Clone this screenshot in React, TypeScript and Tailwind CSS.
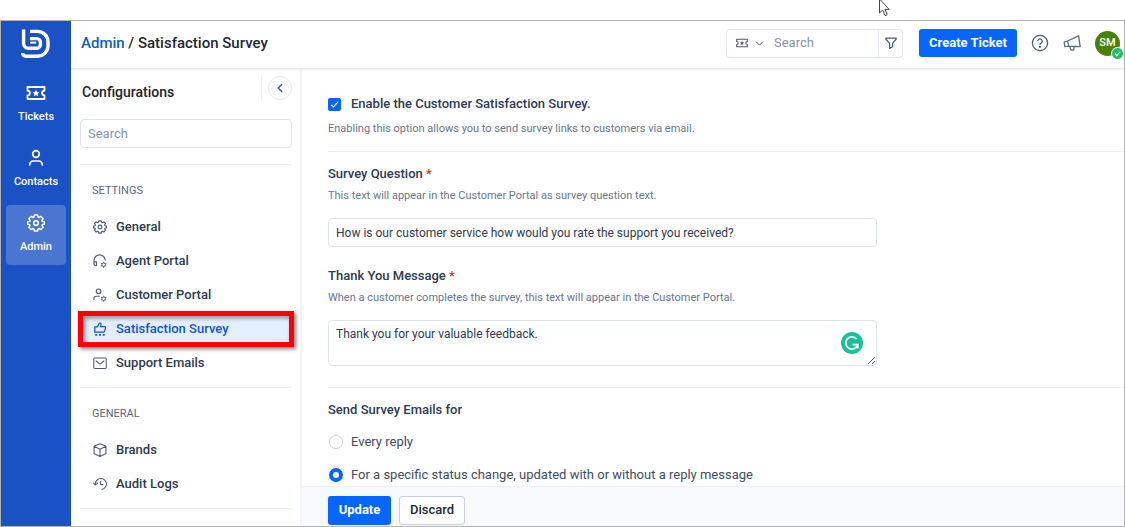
import React from 'react';
import { ChevronLeft, ChevronDown } from 'lucide-react';

type IconProps = { className?: string };

const LogoIcon: React.FC<IconProps> = ({ className }) => (
  <svg viewBox="0 0 30 30" className={className} fill="none" stroke="currentColor" strokeWidth="3.4" strokeLinejoin="round">
    <path d="M2.6 .6v13.8a4.8 4.8 0 0 0 4.8 4.8h8.4a3.6 3.6 0 0 0 3.6-3.6v-2.4a3.6 3.6 0 0 0-3.6-3.6H9" />
    <path d="M9.2 13.6h6" strokeWidth="2" />
    <path d="M9 2.4h7.6a10.4 10.4 0 0 1 10.4 10.4v4a10.4 10.4 0 0 1-10.4 10.4H4.8a3.2 3.2 0 0 1-3.2-3.2" />
  </svg>
);

const TicketIcon: React.FC<IconProps> = ({ className }) => (
  <svg viewBox="0 0 20 16" className={className} fill="none" stroke="currentColor" strokeWidth="1.8" strokeLinejoin="round">
    <path d="M1.5 2h17v3.6a2.4 2.4 0 0 0 0 4.8V14h-17v-3.6a2.4 2.4 0 0 0 0-4.8z" />
    <path d="m10 4.6 1 2.3 2.5.2-1.9 1.6.6 2.5-2.2-1.3-2.2 1.3.6-2.5-1.9-1.6 2.5-.2z" fill="currentColor" stroke="none" />
  </svg>
);

const PersonIcon: React.FC<IconProps> = ({ className }) => (
  <svg viewBox="0 0 18 18" className={className} fill="none" stroke="currentColor" strokeWidth="1.7">
    <circle cx="9" cy="5" r="3.3" />
    <path d="M2.8 16.6v-1.2a3.4 3.4 0 0 1 3.4-3.4h5.6a3.4 3.4 0 0 1 3.4 3.4v1.2" />
  </svg>
);

const GearIcon: React.FC<IconProps> = ({ className }) => (
  <svg viewBox="0 0 20 20" className={className} fill="none" stroke="currentColor" strokeWidth="1.7" strokeLinejoin="round">
    <path d="M8.2 1.2h3.6l.6 2.3 1 .4 2-1.2 2.5 2.5-1.2 2 .4 1 2.3.6v2.4l-2.3.6-.4 1 1.2 2-2.5 2.5-2-1.2-1 .4-.6 2.3H8.2l-.6-2.3-1-.4-2 1.2-2.5-2.5 1.2-2-.4-1-2.3-.6V8.8l2.3-.6.4-1-1.2-2 2.5-2.5 2 1.2 1-.4z" />
    <circle cx="10" cy="10" r="2.6" />
  </svg>
);

const SmallGear = () => (
  <>
    <circle cx="12.2" cy="12.2" r="2" strokeWidth="1.1" />
    <path d="M12.2 8.8v1.2M12.2 14.4v1.2M9.2 10.5l1.1.6M14.1 13.3l1.1.6M9.2 13.9l1.1-.6M14.1 11.1l1.1-.6" strokeWidth="1.2" />
  </>
);

const HeadsetIcon: React.FC<IconProps> = ({ className }) => (
  <svg viewBox="0 0 16 16" className={className} fill="none" stroke="currentColor" strokeWidth="1.3" strokeLinejoin="round">
    <path d="M4 13.4h-.8a2 2 0 0 1-2-2V7.4a6.4 6.4 0 0 1 12.8 0M1.2 9H4v4.4" />
    <SmallGear />
  </svg>
);

const PersonGearIcon: React.FC<IconProps> = ({ className }) => (
  <svg viewBox="0 0 16 16" className={className} fill="none" stroke="currentColor" strokeWidth="1.3" strokeLinejoin="round">
    <circle cx="6.4" cy="3.8" r="2.7" />
    <path d="M1 13.6v-1.2a3 3 0 0 1 3-3h3.6" />
    <SmallGear />
  </svg>
);

const ThumbIcon: React.FC<IconProps> = ({ className }) => (
  <svg viewBox="0 0 16 16" className={className} fill="none" stroke="currentColor" strokeWidth="1.4" strokeLinejoin="round">
    <path d="M2 5.6h2.8L7.4 1.2c1.4-.2 2 .6 1.8 1.8l-.6 2.2h4.2c1 0 1.6.8 1.4 1.7l-.9 3.6c-.2.7-.7 1.1-1.4 1.1H2z" />
    <path d="M2.6 14.6h2.2M6.9 14.6h2.2M11.2 14.6h2.2" strokeWidth="2" />
  </svg>
);

const MailIcon: React.FC<IconProps> = ({ className }) => (
  <svg viewBox="0 0 16 16" className={className} fill="none" stroke="currentColor" strokeWidth="1.2" strokeLinejoin="round">
    <rect x=".9" y="2.2" width="14.2" height="12" rx="1.2" />
    <path d="m3.2 5.4 4.8 3.8 4.8-3.8" />
  </svg>
);

const BoxIcon: React.FC<IconProps> = ({ className }) => (
  <svg viewBox="0 0 16 16" className={className} fill="none" stroke="currentColor" strokeWidth="1.2" strokeLinejoin="round">
    <path d="M8 .8 14.8 3.8v8.2L8 15.4 1.2 12V3.8zM1.2 3.8 8 7.2l6.8-3.4M8 7.2v8.2" />
  </svg>
);

const HistoryIcon: React.FC<IconProps> = ({ className }) => (
  <svg viewBox="0 0 16 16" className={className} fill="none" stroke="currentColor" strokeWidth="1.2" strokeLinejoin="round">
    <path d="M2.8 8.8A6.3 6.3 0 1 1 10 14.2M.4 6.8l2.4 2.4 2.6-2.4M8.8 4.6v4h3.2" />
  </svg>
);

const FilterIcon: React.FC<IconProps> = ({ className }) => (
  <svg viewBox="0 0 14 14" className={className} fill="none" stroke="currentColor" strokeWidth="1.2" strokeLinejoin="round">
    <path d="M1.8 2.2h10.4v.8L8.6 7.4v3.4l-3 1.6v-5L1.8 3z" />
  </svg>
);

const HelpIcon: React.FC<IconProps> = ({ className }) => (
  <svg viewBox="0 0 18 18" className={className} fill="none" stroke="currentColor" strokeWidth="1.3">
    <circle cx="9" cy="9" r="7.6" />
    <path d="M6.8 7.2a2.2 2.2 0 1 1 3.4 1.8c-.8.5-1.2.9-1.2 1.8" />
    <circle cx="9" cy="12.8" r=".5" fill="currentColor" />
  </svg>
);

const MegaphoneIcon: React.FC<IconProps> = ({ className }) => (
  <svg viewBox="0 0 18 18" className={className} fill="none" stroke="currentColor" strokeWidth="1.3" strokeLinejoin="round">
    <path d="M4.6 7 15.6 1.8l1.6 10.8-11.4-.4zM4.6 7l-3.4 1.2.6 4.4 4-.4M6.8 12.4l.6 2.2a1.8 1.8 0 0 0 3.6-.4v-1.6" />
  </svg>
);

const GrammarIcon: React.FC<IconProps> = ({ className }) => (
  <svg viewBox="0 0 22 22" className={className} fill="none" stroke="white" strokeWidth="1.8">
    <circle cx="11" cy="11" r="11" fill="#15c39a" stroke="none" />
    <path d="M15.6 7A6.1 6.1 0 1 0 16.4 13.6M11.6 12.6h5.2v4" />
  </svg>
);

const MAIN_NAV = [
  { label: 'Tickets', icon: TicketIcon, size: 'w-5 h-4', active: false },
  { label: 'Contacts', icon: PersonIcon, size: 'size-[18px]', active: false },
  { label: 'Admin', icon: GearIcon, size: 'size-[18px]', active: true },
];

const SETTINGS = [
  { label: 'General', icon: GearIcon, active: false },
  { label: 'Agent Portal', icon: HeadsetIcon, active: false },
  { label: 'Customer Portal', icon: PersonGearIcon, active: false },
  { label: 'Satisfaction Survey', icon: ThumbIcon, active: true },
  { label: 'Support Emails', icon: MailIcon, active: false },
];

const GENERAL = [
  { label: 'Brands', icon: BoxIcon, active: false },
  { label: 'Audit Logs', icon: HistoryIcon, active: false },
];

const MenuSection: React.FC<{ title: string; items: typeof SETTINGS }> = ({ title, items }) => (
  <section className="border-t border-[#e9edf3] pt-4 pb-[7px]">
    <h3 className="px-3 text-[11px] leading-5 text-[#5a6680]">{title}</h3>
    <ul className="mt-[9px]">
      {items.map(({ label, icon: Icon, active }) => (
        <li key={label} className="relative">
          <a
            href="#"
            className={`flex h-[34px] items-center gap-[9px] px-[13px] text-[13px] font-medium ${active ? 'text-[#0d55cf]' : 'text-[#2d3a50]'}`}
          >
            {active && <span className="absolute inset-x-0 inset-y-[5px] bg-[#e3eeff]"></span>}
            <Icon className={`relative size-3.5 ${active ? '' : 'text-[#4c5a72]'}`} />
            <span className="relative">{label}</span>
          </a>
          {active && (
            <span className="pointer-events-none absolute -inset-x-0.5 -inset-y-px border-[5px] border-[#fb0007] shadow-[2px_2px_4px_rgba(0,0,0,0.5),inset_2px_2px_4px_rgba(0,0,0,0.45)]"></span>
          )}
        </li>
      ))}
    </ul>
  </section>
);

const App: React.FC = () => {
  return (
    <div className="relative flex h-screen flex-col bg-white pt-5 font-[Roboto,sans-serif] text-[#2d3a50]">
      {/* Mouse pointer */}
      <svg viewBox="0 0 12 18" className="absolute top-0 left-[78%] h-[18px] w-3" fill="white" stroke="#444" strokeWidth="1">
        <path d="M1.5-1v14l3.2-3 2.3 5.6 2.2-.9-2.3-5.3h4.3z" />
      </svg>

      <div className="flex min-h-0 flex-1 border border-[#b3b3b3]">
        {/* Main navigation */}
        <nav className="flex w-[70px] shrink-0 flex-col items-center bg-[#1a52c6] pt-2 text-white">
          <LogoIcon className="size-[30px]" />
          <div className="mt-4 flex flex-col gap-[5px]">
            {MAIN_NAV.map(({ label, icon: Icon, size, active }) => (
              <a
                key={label}
                href="#"
                className={`flex h-[60px] w-[60px] flex-col items-center rounded pt-2 text-[11px] leading-4 font-medium ${active ? 'bg-[#4a76d2]' : ''}`}
              >
                <span className="flex h-5 items-center"><Icon className={size} /></span>
                <span className="mt-1.5">{label}</span>
              </a>
            ))}
          </div>
        </nav>

        <div className="flex min-w-0 flex-1 flex-col">
          {/* Top bar */}
          <header className="z-10 flex h-12 shrink-0 items-center border-b border-[#e3e9f1] pr-1 pb-[3px] pl-2.5 shadow-[0_1px_2px_rgba(60,90,130,0.1)]">
            <h1 className="flex-1 text-[15px] font-medium text-[#23272f]">
              <a href="#" className="text-[#0b5fc4]">Admin</a> / Satisfaction Survey
            </h1>
            <div className="flex h-[29px] w-[177px] items-center rounded border border-[#dfe4ee] text-[#4c5a72]">
              <button aria-label="Search type" className="flex items-center gap-1 pl-2">
                <TicketIcon className="h-2.5 w-3.5" />
                <ChevronDown size={13} strokeWidth={1.8} />
              </button>
              <input
                type="search"
                aria-label="Search tickets"
                placeholder="Search"
                className="ml-2 min-w-0 flex-1 text-[13px] outline-none placeholder:text-[#8593ab]"
              />
              <button aria-label="Filter" className="flex h-full w-6 items-center justify-center border-l border-[#e6eaf1]">
                <FilterIcon className="size-3.5" />
              </button>
            </div>
            <button className="ml-4 h-7 w-[98px] rounded-[3px] bg-[#0566ff] text-[13px] font-bold text-white">Create Ticket</button>
            <button aria-label="Help" className="ml-3.5 text-[#4c5a72]"><HelpIcon className="size-[18px]" /></button>
            <button aria-label="Announcements" className="ml-3.5 text-[#5a6c8a]"><MegaphoneIcon className="size-[18px]" /></button>
            <div className="relative ml-3.5 flex size-[25px] items-center justify-center rounded-full bg-[#498205] text-[11px] font-medium text-white">
              SM
              <svg viewBox="0 0 13 13" className="absolute -right-1 -bottom-1 size-[13px]">
                <circle cx="6.5" cy="6.5" r="6" fill="#1fbf68" stroke="white" />
                <path d="m3.8 6.6 2 1.9 3.4-3.6" fill="none" stroke="white" strokeWidth="1.3" />
              </svg>
            </div>
          </header>

          <div className="flex min-h-0 flex-1">
            {/* Configuration menu */}
            <aside className="w-[231px] shrink-0 overflow-hidden border-r-2 border-[#f2f4f8] pt-1.5 pr-2 pl-[9px]">
              <div className="flex items-start">
                <h2 className="flex-1 pt-[7px] pl-0.5 text-[14px] leading-5 font-medium text-[#20242c]">Configurations</h2>
                <div className="flex h-[26px] items-center border-l border-[#eceff4] pl-1.5">
                  <button aria-label="Collapse" className="flex size-6 items-center justify-center rounded-full border border-[#e4e8f0] text-[#4c5a72]">
                    <ChevronLeft size={14} strokeWidth={2.5} />
                  </button>
                </div>
              </div>
              <input
                type="search"
                aria-label="Search configurations"
                placeholder="Search"
                className="mt-[17px] mb-4 h-[29px] w-full rounded border border-[#dde3ed] px-[7px] text-[13px] outline-none placeholder:text-[#8593ab]"
              />
              <MenuSection title="SETTINGS" items={SETTINGS} />
              <MenuSection title="GENERAL" items={GENERAL} />
              <hr className="border-[#e9edf3]" />
            </aside>

            {/* Survey form */}
            <form className="flex min-w-0 flex-1 flex-col">
              <div className="min-h-0 flex-1 overflow-hidden pt-[25px] pl-[26px]">
                <label className="flex items-center gap-2.5 text-[13px] leading-5 font-medium">
                  <span className="relative flex size-[13px]">
                    <input type="checkbox" defaultChecked className="size-[13px] appearance-none rounded-xs bg-[#0566ff]" />
                    <svg viewBox="0 0 13 13" className="pointer-events-none absolute inset-0" fill="none" stroke="white" strokeWidth="1.2">
                      <path d="m3.2 6.8 2.2 2.2 4.4-4.8" />
                    </svg>
                  </span>
                  Enable the Customer Satisfaction Survey.
                </label>
                <p className="mt-[5px] mb-3 text-[11px] leading-5 text-[#66758f]">
                  Enabling this option allows you to send survey links to customers via email.
                </p>

                <div className="border-t border-[#e9edf3] pt-3">
                  <label htmlFor="question" className="block text-[13px] leading-5 font-medium">
                    Survey Question <span className="text-[#f5222d]">*</span>
                  </label>
                  <p className="mt-0.5 text-[11px] leading-5 text-[#66758f]">
                    This text will appear in the Customer Portal as survey question text.
                  </p>
                  <input
                    id="question"
                    type="text"
                    defaultValue="How is our customer service how would you rate the support you received?"
                    className="mt-3 block h-[29px] w-[69%] rounded border border-[#dde3ed] px-[7px] text-[12px] outline-none"
                  />
                </div>

                <div className="mt-[19px]">
                  <label htmlFor="thanks" className="block text-[13px] leading-5 font-medium">
                    Thank You Message <span className="text-[#f5222d]">*</span>
                  </label>
                  <p className="mt-0.5 text-[11px] leading-5 text-[#66758f]">
                    When a customer completes the survey, this text will appear in the Customer Portal.
                  </p>
                  <div className="relative mt-3 w-[69%]">
                    <textarea
                      id="thanks"
                      defaultValue="Thank you for your valuable feedback."
                      className="block h-[46px] w-full resize rounded border border-[#dde3ed] px-[7px] py-1 text-[12px] leading-[18px] outline-none"
                    />
                    <GrammarIcon className="absolute right-3.5 bottom-3 size-[22px]" />
                  </div>
                </div>

                <fieldset className="mt-[21px] border-t border-[#e9edf3] pt-3">
                  <legend className="float-left w-full text-[13px] leading-5 font-medium">Send Survey Emails for</legend>
                  <label className="clear-both flex items-center gap-2 pt-3 pl-px text-[13px] leading-5 text-[#3f4b61]">
                    <input type="radio" name="send" className="size-3.5 appearance-none rounded-full border border-[#c8d0de] checked:border-4 checked:border-[#0566ff]" />
                    Every reply
                  </label>
                  <label className="flex items-center gap-2 pt-[13px] pl-px text-[13px] leading-5 text-[#3f4b61]">
                    <input type="radio" name="send" defaultChecked className="size-3.5 appearance-none rounded-full border border-[#c8d0de] checked:border-4 checked:border-[#0566ff]" />
                    For a specific status change, updated with or without a reply message
                  </label>
                </fieldset>
              </div>

              <div className="flex h-10 shrink-0 items-center gap-2 border-t border-[#edf1f5] bg-[#f6fafd] pt-2 pb-px pl-[26px]">
                <button type="submit" className="h-[29px] w-[63px] rounded-[3px] bg-[#0566ff] text-[13px] font-bold text-white">Update</button>
                <button type="button" className="h-[29px] w-[66px] rounded-[3px] border border-[#c8d0de] bg-white text-[13px] font-medium text-[#23272f]">Discard</button>
              </div>
            </form>
          </div>
        </div>
      </div>
    </div>
  );
};

export default App;
